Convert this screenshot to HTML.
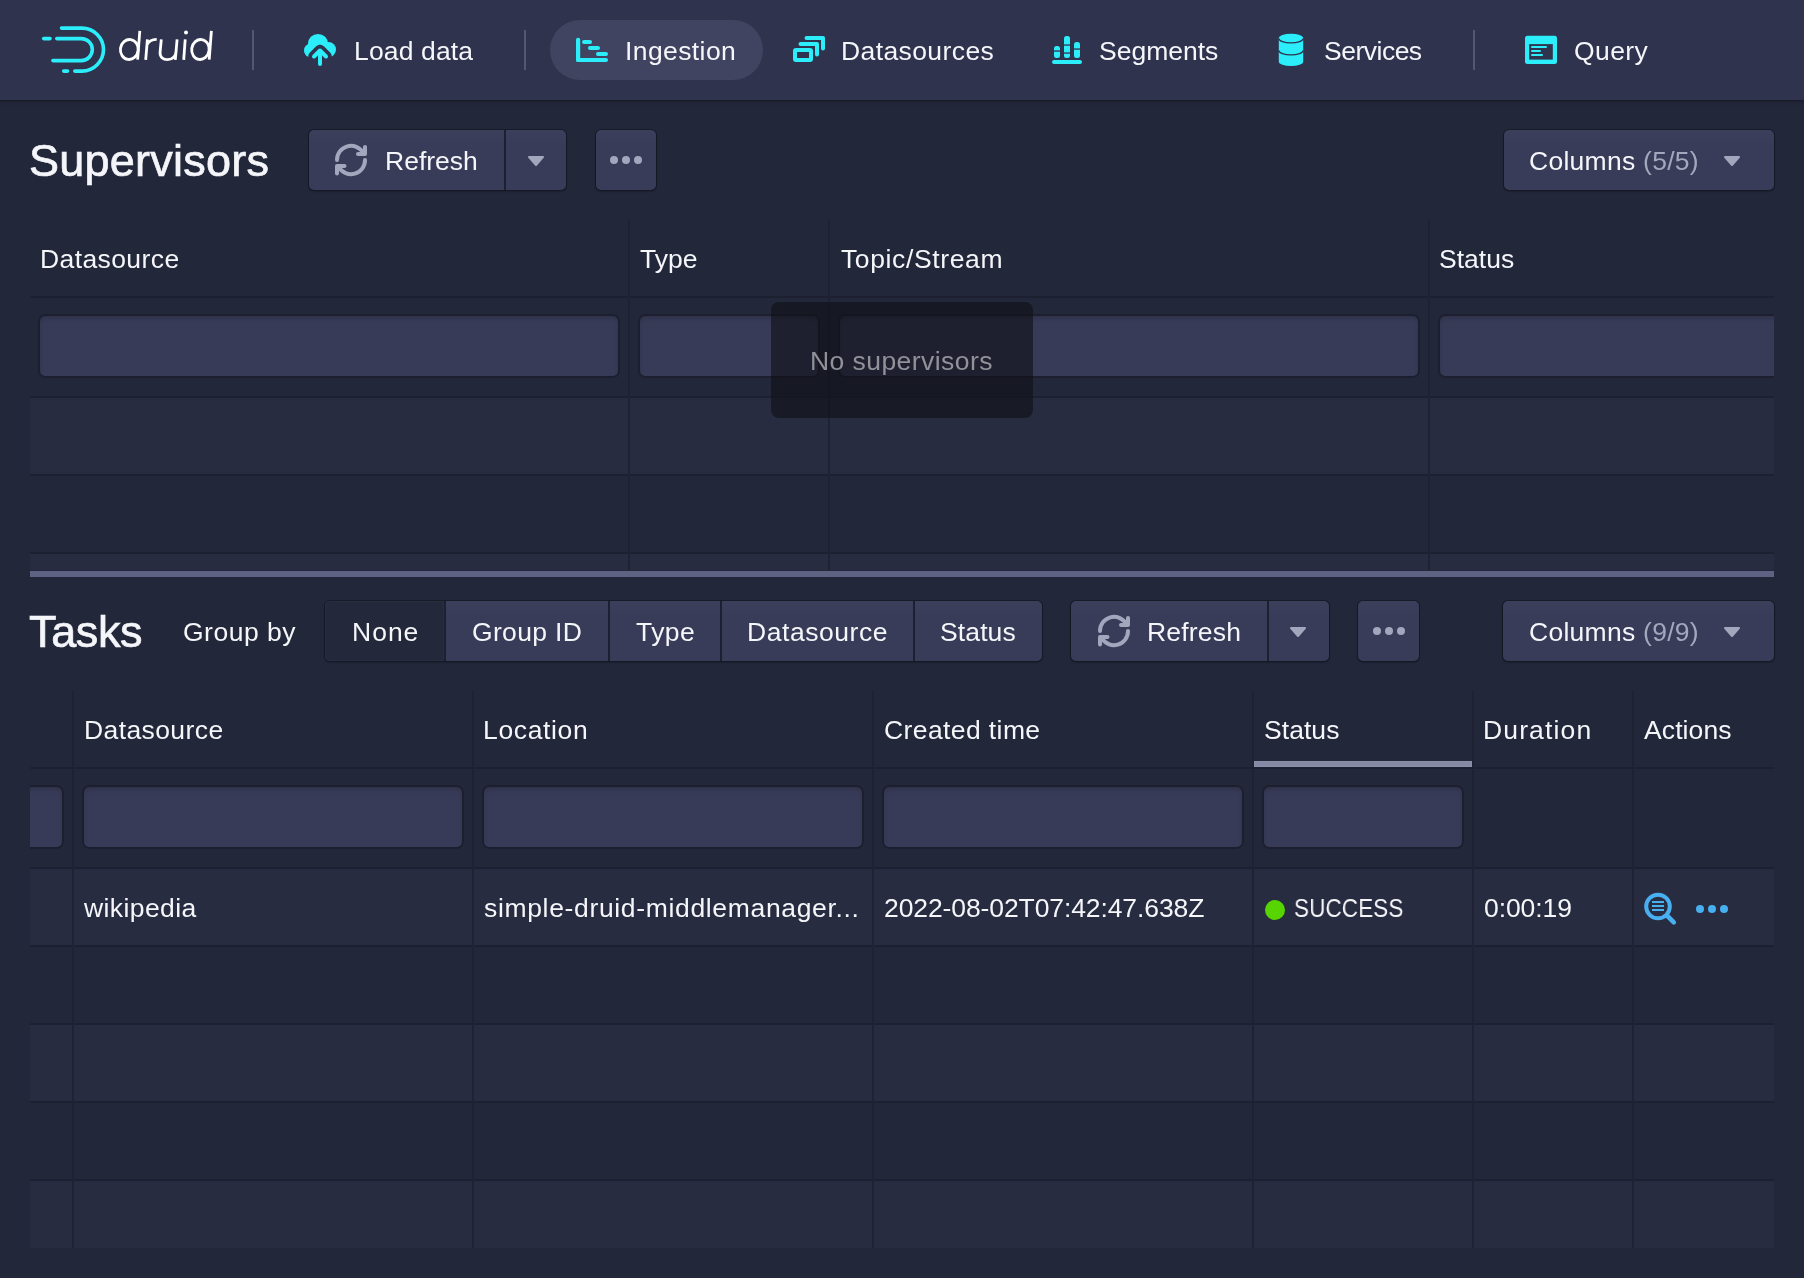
<!DOCTYPE html>
<html><head><meta charset="utf-8">
<style>
html,body{margin:0;padding:0;width:1804px;height:1278px;overflow:hidden;background:#23273a;font-family:"Liberation Sans",sans-serif;color:#f5f6fa;}
.a{position:absolute}
.t{position:absolute;white-space:nowrap;line-height:1;font-size:26.5px;letter-spacing:.4px;color:#f5f6fa;will-change:transform}
.big{font-size:45px;letter-spacing:.25px;-webkit-text-stroke:.7px #f5f6fa}
.nav{left:0;top:0;width:1804px;height:100px;background:#2f334d;box-shadow:0 1px 0 rgba(16,18,26,.35),0 2px 3px rgba(16,18,26,.35)}
.vd{width:2px;height:40px;top:30px;background:#53576f}
.pill{left:550px;top:20px;width:213px;height:60px;border-radius:30px;background:#404460}
.btn{background:#383c58 linear-gradient(rgba(255,255,255,.02),rgba(255,255,255,0) 25%);border-radius:5px;box-shadow:0 0 0 1px rgba(18,20,30,.6),0 1px 1px 1px rgba(18,20,30,.35)}
.inp{background:#383b57;border-radius:7px;box-shadow:inset 0 0 0 2px #1d1f2e,inset 0 3px 5px rgba(16,18,26,.35)}
.stripe{background:#282c40}
.hl{height:2px;background:#1d2030}
.vl{width:2px;background:#1f2232}
</style></head>
<body>
<!-- NAVBAR -->
<div class="a nav"></div>
<div class="a vd" style="left:252px"></div>
<div class="a vd" style="left:524px"></div>
<div class="a vd" style="left:1473px"></div>
<div class="a pill"></div>
<div class="t" style="left:354px;top:38px;letter-spacing:.15px">Load data</div>
<div class="t" style="left:625px;top:38px">Ingestion</div>
<div class="t" style="left:841px;top:38px">Datasources</div>
<div class="t" style="left:1099px;top:38px;letter-spacing:0">Segments</div>
<div class="t" style="left:1324px;top:38px;letter-spacing:-.5px">Services</div>
<div class="t" style="left:1574px;top:38px">Query</div>

<!-- SUPERVISORS HEADER -->
<div class="t big" style="left:29px;top:138px">Supervisors</div>
<div class="a btn" style="left:309px;top:130px;width:257px;height:60px"></div>
<div class="a" style="left:504px;top:130px;width:2px;height:60px;background:#1d2030"></div>
<div class="t" style="left:385px;top:148px;letter-spacing:0">Refresh</div>
<div class="a btn" style="left:596px;top:130px;width:60px;height:60px"></div>
<div class="a btn" style="left:1504px;top:130px;width:270px;height:60px"></div>
<div class="t" style="left:1529px;top:148px;letter-spacing:.27px">Columns <span style="color:#a3a7bd">(5/5)</span></div>

<!-- SUPERVISORS TABLE -->
<div class="a" style="left:30px;top:220px;width:1744px;height:350px;overflow:hidden">
  <div class="a stripe" style="left:0;top:178px;width:1744px;height:76px"></div>
  <div class="a stripe" style="left:0;top:334px;width:1744px;height:20px"></div>
  <div class="a hl" style="left:0;top:76px;width:1744px"></div>
  <div class="a hl" style="left:0;top:176px;width:1744px"></div>
  <div class="a hl" style="left:0;top:254px;width:1744px"></div>
  <div class="a hl" style="left:0;top:332px;width:1744px"></div>
  <div class="a vl" style="left:598px;top:0;height:350px"></div>
  <div class="a vl" style="left:798px;top:0;height:350px"></div>
  <div class="a vl" style="left:1398px;top:0;height:350px"></div>
  <div class="a inp" style="left:8px;top:94px;width:582px;height:64px"></div>
  <div class="a inp" style="left:608px;top:94px;width:182px;height:64px"></div>
  <div class="a inp" style="left:808px;top:94px;width:582px;height:64px"></div>
  <div class="a inp" style="left:1408px;top:94px;width:360px;height:64px"></div>
</div>
<div class="t" style="left:40px;top:246px">Datasource</div>
<div class="t" style="left:640px;top:246px;letter-spacing:.03px">Type</div>
<div class="t" style="left:841px;top:246px;letter-spacing:.62px">Topic/Stream</div>
<div class="t" style="left:1439px;top:246px;letter-spacing:0">Status</div>
<div class="a" style="left:771px;top:302px;width:262px;height:116px;border-radius:8px;background:rgba(14,16,22,.62)"></div>
<div class="t" style="left:810px;top:348px;color:#909199;letter-spacing:.44px">No supervisors</div>
<div class="a" style="left:30px;top:571px;width:1744px;height:6px;background:#5f6383"></div>

<!-- TASKS HEADER -->
<div class="t big" style="left:29px;top:609px;letter-spacing:-.37px">Tasks</div>
<div class="t" style="left:183px;top:619px;letter-spacing:.5px">Group by</div>
<div class="a btn" style="left:325px;top:601px;width:717px;height:60px"></div>
<div class="a" style="left:325px;top:601px;width:119px;height:60px;border-radius:5px 0 0 5px;background:#23283b;box-shadow:inset 0 0 0 1px rgba(255,255,255,.025)"></div>
<div class="a" style="left:608px;top:601px;width:2px;height:60px;background:#1d2030"></div>
<div class="a" style="left:720px;top:601px;width:2px;height:60px;background:#1d2030"></div>
<div class="a" style="left:913px;top:601px;width:2px;height:60px;background:#1d2030"></div>
<div class="a" style="left:444px;top:601px;width:2px;height:60px;background:#1d2030"></div>
<div class="t" style="left:352px;top:619px;letter-spacing:1px">None</div>
<div class="t" style="left:472px;top:619px;letter-spacing:.33px">Group ID</div>
<div class="t" style="left:636px;top:619px">Type</div>
<div class="t" style="left:747px;top:619px;letter-spacing:.55px">Datasource</div>
<div class="t" style="left:940px;top:619px;letter-spacing:.12px">Status</div>
<div class="a btn" style="left:1071px;top:601px;width:258px;height:60px"></div>
<div class="a" style="left:1267px;top:601px;width:2px;height:60px;background:#1d2030"></div>
<div class="t" style="left:1147px;top:619px;letter-spacing:.2px">Refresh</div>
<div class="a btn" style="left:1358px;top:601px;width:61px;height:60px"></div>
<div class="a btn" style="left:1503px;top:601px;width:271px;height:60px"></div>
<div class="t" style="left:1529px;top:619px;letter-spacing:.27px">Columns <span style="color:#a3a7bd">(9/9)</span></div>

<!-- TASKS TABLE -->
<div class="a" style="left:30px;top:691px;width:1744px;height:557px;overflow:hidden">
  <div class="a stripe" style="left:0;top:178px;width:1744px;height:77px"></div>
  <div class="a stripe" style="left:0;top:334px;width:1744px;height:77px"></div>
  <div class="a stripe" style="left:0;top:490px;width:1744px;height:67px"></div>
  <div class="a hl" style="left:0;top:76px;width:1744px"></div>
  <div class="a hl" style="left:0;top:176px;width:1744px"></div>
  <div class="a hl" style="left:0;top:254px;width:1744px"></div>
  <div class="a hl" style="left:0;top:332px;width:1744px"></div>
  <div class="a hl" style="left:0;top:410px;width:1744px"></div>
  <div class="a hl" style="left:0;top:488px;width:1744px"></div>
  <div class="a vl" style="left:42px;top:0;height:557px"></div>
  <div class="a vl" style="left:442px;top:0;height:557px"></div>
  <div class="a vl" style="left:842px;top:0;height:557px"></div>
  <div class="a vl" style="left:1222px;top:0;height:557px"></div>
  <div class="a vl" style="left:1442px;top:0;height:557px"></div>
  <div class="a vl" style="left:1602px;top:0;height:557px"></div>
  <div class="a" style="left:1224px;top:70px;width:218px;height:6px;background:#8589a4;box-shadow:inset 0 0 0 1px rgba(255,255,255,.06)"></div>
  <div class="a inp" style="left:-20px;top:94px;width:54px;height:64px"></div>
  <div class="a inp" style="left:52px;top:94px;width:382px;height:64px"></div>
  <div class="a inp" style="left:452px;top:94px;width:382px;height:64px"></div>
  <div class="a inp" style="left:852px;top:94px;width:362px;height:64px"></div>
  <div class="a inp" style="left:1232px;top:94px;width:202px;height:64px"></div>
</div>
<div class="t" style="left:84px;top:717px">Datasource</div>
<div class="t" style="left:483px;top:717px;letter-spacing:.65px">Location</div>
<div class="t" style="left:884px;top:717px">Created time</div>
<div class="t" style="left:1264px;top:717px;letter-spacing:.05px">Status</div>
<div class="t" style="left:1483px;top:717px;letter-spacing:1.14px">Duration</div>
<div class="t" style="left:1644px;top:717px;letter-spacing:.1px">Actions</div>

<div class="t" style="left:84px;top:895px">wikipedia</div>
<div class="t" style="left:484px;top:895px;letter-spacing:.66px">simple-druid-middlemanager...</div>
<div class="t" style="left:884px;top:895px;letter-spacing:-.1px">2022-08-02T07:42:47.638Z</div>
<div class="a" style="left:1265px;top:900px;width:20px;height:20px;border-radius:50%;background:#57d500"></div>
<div class="t" style="left:1294px;top:895px;letter-spacing:.2px;transform:scaleX(.845);transform-origin:0 0">SUCCESS</div>
<div class="t" style="left:1484px;top:895px;letter-spacing:-.08px">0:00:19</div>

<!-- ICONS -->
<svg class="a" style="left:0;top:0" width="1804" height="1278" viewBox="0 0 1804 1278">
<defs>
<mask id="cm" maskUnits="userSpaceOnUse" x="290" y="20" width="60" height="60">
<rect x="290" y="20" width="60" height="60" fill="#fff"/>
<path d="M314 56.5 L320 50.5 L326 56.5 M320 50.5 V64" stroke="#000" stroke-width="11.6" fill="none" stroke-linejoin="round" stroke-linecap="round"/>
</mask>
</defs>
<!-- logo mark -->
<g fill="none" stroke="#2ceefb" stroke-width="3.6" stroke-linecap="round">
<path d="M43.7 38.6 H50"/>
<path d="M56.8 38.6 H81.3 A11 11 0 0 1 81.3 60.6 H52.9"/>
<path d="M61.5 28.1 H82 A21.5 21.5 0 0 1 82 71.1 H74.8"/>
<path d="M63.7 71.1 H67.5"/>
</g>
<!-- druid wordmark -->
<g fill="none" stroke="#fff" stroke-width="2.8">
<ellipse cx="129.3" cy="49.5" rx="8.9" ry="10" transform="rotate(8 129.3 49.5)"/>
<path d="M139.8 30.9 L137.6 59.6"/>
<path d="M147.4 39.3 L145.7 59.8 M146.9 45 C148.5 41 152 39.3 156.7 39.3"/>
<path d="M161.3 39.3 L160.1 52 C159.6 57 163 59.6 167.6 59.6 C172.8 59.6 175.8 56.5 176.3 50 M177.1 39.3 L175.3 59.8"/>
<path d="M185.2 39.3 L183.7 59.8"/>
<ellipse cx="200.4" cy="49.5" rx="8.7" ry="10" transform="rotate(8 200.4 49.5)"/>
<path d="M211.4 30.9 L209.2 59.6"/>
</g>
<circle cx="186" cy="32.4" r="2" fill="#fff"/>
<!-- cloud upload -->
<g fill="#2ceefb">
<g mask="url(#cm)">
<circle cx="318" cy="44" r="10.1"/>
<circle cx="311" cy="50.5" r="7"/>
<circle cx="328.5" cy="49.6" r="7.5"/>
<rect x="311" y="44" width="18" height="13.5"/>
</g>
<path d="M314 56.5 L320 50.5 L326 56.5 M320 50.5 V64" stroke="#2ceefb" stroke-width="4" fill="none" stroke-linejoin="round" stroke-linecap="round"/>
</g>
<!-- gantt (ingestion) -->
<g fill="#2ceefb">
<rect x="576" y="37.8" width="4.2" height="24.2" rx="2"/>
<rect x="576" y="57.9" width="32" height="4.2" rx="2"/>
<rect x="582" y="40" width="10" height="4" rx="2"/>
<rect x="588" y="46" width="12" height="4" rx="2"/>
<rect x="596" y="52" width="12" height="4" rx="2"/>
</g>
<!-- datasources -->
<g fill="none" stroke="#2ceefb" stroke-width="4" stroke-linejoin="round">
<rect x="795" y="50" width="16" height="10" rx="1"/>
<path d="M800.5 44 H817 V54.5" stroke-linecap="round"/>
<path d="M806.5 38 H823 V48.5" stroke-linecap="round"/>
</g>
<!-- segments -->
<g fill="#2ceefb">
<rect x="1054" y="46" width="6" height="12" rx="2.5"/>
<rect x="1064" y="36" width="6" height="22" rx="2.5"/>
<rect x="1074" y="42" width="6" height="16" rx="2.5"/>
<rect x="1052" y="60" width="30" height="4" rx="2"/>
</g>
<g fill="#2f334d">
<rect x="1053" y="50.4" width="8" height="1.3"/>
<rect x="1063" y="44.4" width="8" height="1.3"/>
<rect x="1063" y="52.4" width="8" height="1.3"/>
<rect x="1073" y="48.4" width="8" height="1.3"/>
</g>
<!-- services database -->
<path d="M1278.8 38 A12.2 4.3 0 0 1 1303.2 38 V61.8 A12.2 4.3 0 0 1 1278.8 61.8 Z" fill="#2ceefb"/>
<g fill="none" stroke="#2f334d" stroke-width="1.4">
<path d="M1278.8 38.6 A12.2 4.3 0 0 0 1303.2 38.6"/>
<path d="M1278.8 50.6 A12.2 4.3 0 0 0 1303.2 50.6"/>
</g>
<!-- query application -->
<rect x="1525" y="35.8" width="32" height="28.2" rx="2.5" fill="#2ceefb"/>
<rect x="1529.2" y="44.1" width="23.6" height="15.5" fill="#2f334d"/>
<g fill="#2ceefb">
<rect x="1531" y="46" width="16" height="2" rx="1"/>
<rect x="1531" y="50" width="10" height="2" rx="1"/>
<rect x="1531" y="54" width="12" height="2" rx="1"/>
</g>
<!-- refresh icons -->
<g fill="#a3a7bd">
<g transform="translate(0 0)" fill="none" stroke="#a3a7bd" stroke-width="4" stroke-linecap="round" stroke-linejoin="round"><path d="M337 160 A14 14 0 0 1 363.1 152.8"/><path d="M365 147 V154 H358"/><path d="M365 160 A14 14 0 0 1 338.9 167.2"/><path d="M337 173.5 V166 H344.5"/></g>
<g transform="translate(763 471)" fill="none" stroke="#a3a7bd" stroke-width="4" stroke-linecap="round" stroke-linejoin="round"><path d="M337 160 A14 14 0 0 1 363.1 152.8"/><path d="M365 147 V154 H358"/><path d="M365 160 A14 14 0 0 1 338.9 167.2"/><path d="M337 173.5 V166 H344.5"/></g>
<!-- carets -->
<path transform="translate(520 144) scale(2)" d="M12 6.5c0-.28-.22-.5-.5-.5h-7a.495.495 0 00-.37.83l3.5 4c.09.1.22.17.37.17s.28-.07.37-.17l3.5-4c.08-.09.13-.2.13-.33z"/>
<path transform="translate(1282 615) scale(2)" d="M12 6.5c0-.28-.22-.5-.5-.5h-7a.495.495 0 00-.37.83l3.5 4c.09.1.22.17.37.17s.28-.07.37-.17l3.5-4c.08-.09.13-.2.13-.33z"/>
<path transform="translate(1716 144) scale(2)" d="M12 6.5c0-.28-.22-.5-.5-.5h-7a.495.495 0 00-.37.83l3.5 4c.09.1.22.17.37.17s.28-.07.37-.17l3.5-4c.08-.09.13-.2.13-.33z"/>
<path transform="translate(1716 615) scale(2)" d="M12 6.5c0-.28-.22-.5-.5-.5h-7a.495.495 0 00-.37.83l3.5 4c.09.1.22.17.37.17s.28-.07.37-.17l3.5-4c.08-.09.13-.2.13-.33z"/>
<!-- more -->
<circle cx="614" cy="160" r="4"/><circle cx="626" cy="160" r="4"/><circle cx="638" cy="160" r="4"/>
<circle cx="1377" cy="631" r="4"/><circle cx="1389" cy="631" r="4"/><circle cx="1401" cy="631" r="4"/>
</g>
<!-- actions -->
<g fill="#48aff0">
<circle cx="1700" cy="909" r="4"/><circle cx="1712" cy="909" r="4"/><circle cx="1724" cy="909" r="4"/>
<rect x="1652" y="901" width="12" height="2"/>
<rect x="1652" y="905" width="12" height="2"/>
<rect x="1652" y="909" width="12" height="2"/>
</g>
<g fill="none" stroke="#48aff0" stroke-width="4" stroke-linecap="round">
<circle cx="1658" cy="906.5" r="11.8"/>
<path d="M1667 915.5 L1673.8 922.3" stroke-width="4.6"/>
</g>
</svg>
</body></html>
